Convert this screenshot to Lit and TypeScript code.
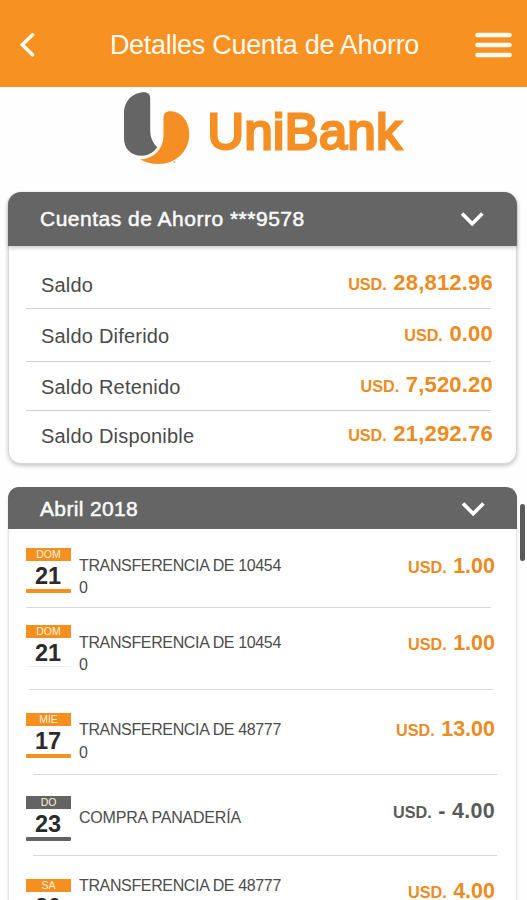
import { LitElement, html, css, svg } from "lit";
import { customElement, property } from "lit/decorators.js";

interface Movement {
  weekday: string;
  day: string;
  lines: string[];
  amount: string;
  debit?: boolean;
}

const balances = [
  { label: "Saldo", amount: "28,812.96" },
  { label: "Saldo Diferido", amount: "0.00" },
  { label: "Saldo Retenido", amount: "7,520.20" },
  { label: "Saldo Disponible", amount: "21,292.76" },
];

const movements: Movement[] = [
  { weekday: "DOM", day: "21", lines: ["TRANSFERENCIA DE 10454", "0"], amount: "1.00" },
  { weekday: "DOM", day: "21", lines: ["TRANSFERENCIA DE 10454", "0"], amount: "1.00" },
  { weekday: "MIE", day: "17", lines: ["TRANSFERENCIA DE 48777", "0"], amount: "13.00" },
  { weekday: "DO", day: "23", lines: ["COMPRA PANADERÍA"], amount: "- 4.00", debit: true },
  { weekday: "SA", day: "20", lines: ["TRANSFERENCIA DE 48777"], amount: "4.00" },
];

const chevron = svg`<path d="M2 2.5 L12.2 12.7 L22.4 2.5" fill="none" stroke="#fff" stroke-width="3.6"/>`;

@customElement("money-amount")
export class MoneyAmount extends LitElement {
  @property() value = "";

  static styles = css`
    :host {
      display: block;
      white-space: nowrap;
      font: bold 22px/24px "Liberation Sans", Arial, sans-serif;
      letter-spacing: 0.2px;
    }
    .currency {
      font-size: 16.2px;
      letter-spacing: 0;
      margin-right: 6.5px;
    }
  `;

  render() {
    return html`<span class="currency">USD.</span><span>${this.value}</span>`;
  }
}

@customElement("date-badge")
export class DateBadge extends LitElement {
  @property() weekday = "";
  @property() day = "";

  static styles = css`
    :host {
      display: flex;
      flex-direction: column;
      width: 45px;
      height: 45px;
      text-align: center;
      font-family: "Liberation Sans", Arial, sans-serif;
      --tone: #f58f1f;
      --rule: var(--tone);
    }
    :host([debit]) {
      --tone: #636363;
    }
    :host([faint]) {
      --rule: transparent;
    }
    .weekday {
      flex: none;
      height: 13px;
      background: var(--tone);
      color: #fff3df;
      font-size: 10.5px;
      line-height: 13px;
    }
    .day {
      flex: none;
      height: 28px;
      color: #2b2b2b;
      font-size: 23.5px;
      font-weight: bold;
      line-height: 30px;
      padding-right: 1px;
    }
    .rule {
      flex: none;
      height: 4px;
      border-radius: 1px;
      background: var(--rule);
    }
    :host([faint]) .rule {
      border-top: 1px solid #f3f0ec;
      border-radius: 0;
    }
  `;

  render() {
    return html`
      <div class="weekday">${this.weekday}</div>
      <div class="day">${this.day}</div>
      <div class="rule"></div>
    `;
  }
}

@customElement("app-root")
export class AppRoot extends LitElement {
  static styles = css`
    :host {
      display: block;
      position: relative;
      height: 900px;
      overflow: hidden;
      background: #fefefe;
      font-family: "Liberation Sans", Arial, sans-serif;
    }
    * {
      box-sizing: border-box;
    }
    svg {
      display: block;
    }
    .topbar {
      display: flex;
      align-items: center;
      justify-content: space-between;
      height: 87px;
      padding: 3px 15px 0 20px;
      background: #f79122;
      color: #fffaf0;
    }
    .title {
      font-size: 27px;
      line-height: 32px;
      letter-spacing: -0.3px;
      margin-left: 18px;
      white-space: nowrap;
    }
    .brand {
      display: flex;
      height: 105px;
      padding: 5px 0 0 123px;
    }
    .brand-name {
      margin: 9px 0 0 10.5px;
      color: #f58f23;
      font-size: 50.5px;
      line-height: 62px;
      letter-spacing: 0.5px;
      -webkit-text-stroke: 2.8px #f58f23;
    }
    .card {
      margin: 0 10px 0 8px;
      background: #fff;
      border: 1px solid #d6d6d6;
      border-top: 0;
      border-radius: 13px;
      box-shadow: 0 2px 4px rgba(0, 0, 0, 0.22);
    }
    .card-head {
      display: flex;
      align-items: center;
      justify-content: space-between;
      height: 54px;
      margin: 0 -1px;
      padding: 0 32px 0 32px;
      border-radius: 13px 13px 0 0;
      background: #656565;
      color: #fafafa;
      font-size: 21px;
      letter-spacing: 0.5px;
      -webkit-text-stroke: 0.5px #fafafa;
    }
    .summary {
      height: 272px;
    }
    .summary .card-head {
      box-shadow: 0 2px 4px rgba(0, 0, 0, 0.2);
    }
    .balances {
      display: grid;
      grid-template-rows: 63px 53px 49px 50px;
      padding: 0 25px 0 17px;
    }
    .balance {
      display: flex;
      justify-content: space-between;
      padding: 27px 0 0 15px;
      border-bottom: 1px solid #cfcfcf;
      color: #4a4a4a;
    }
    .balance + .balance {
      padding-top: 15px;
    }
    .balance:nth-child(n + 3) {
      padding-top: 13px;
    }
    .balance:last-child {
      border-bottom: 0;
    }
    .label {
      font-size: 20px;
      line-height: 24px;
      letter-spacing: 0.2px;
    }
    .balance money-amount,
    .movement money-amount {
      color: #ec8b1f;
    }
    .balance money-amount {
      margin: -2px -2px 0 0;
    }
    .history {
      height: 440px;
      margin-top: 23px;
      border-color: #e6e6e6;
      box-shadow: 0 1px 3px rgba(0, 0, 0, 0.12);
    }
    .history .card-head {
      height: 42px;
      border-radius: 11px 11px 0 0;
      padding-top: 2px;
      padding-right: 31px;
      letter-spacing: 0.35px;
    }
    .movements {
      display: grid;
      grid-template-rows: 79px 82px 85px 81px 85px;
      padding: 0 19px 0 17px;
    }
    .movement {
      display: grid;
      grid-template-columns: 45px 1fr auto;
      align-items: start;
      column-gap: 8px;
      background: linear-gradient(#dadada, #dadada) 0 100% / 465px 1px no-repeat;
    }
    .movement date-badge {
      margin-top: 19px;
    }
    .detail {
      margin-top: 26px;
      color: #4c4c4c;
      font-size: 16px;
      line-height: 22px;
      letter-spacing: -0.36px;
      white-space: nowrap;
    }
    .movement money-amount {
      margin: 25px 2px 0 0;
      font-size: 21.5px;
      letter-spacing: 0;
    }
    .movement:nth-child(2) {
      background-position: 3px 100%;
      background-size: 464px 1px;
    }
    .movement:nth-child(2) date-badge {
      margin-top: 17px;
    }
    .movement:nth-child(2) .detail {
      margin-top: 24px;
    }
    .movement:nth-child(2) money-amount {
      margin-top: 23px;
    }
    .movement:nth-child(n + 3) {
      background-position: 7px 100%;
      background-size: 464px 1px;
    }
    .movement:nth-child(3) date-badge,
    .movement:nth-child(5) date-badge {
      margin-top: 23px;
    }
    .movement:nth-child(3) .detail {
      margin-top: 28px;
      line-height: 23px;
    }
    .movement:nth-child(3) money-amount {
      margin-top: 27px;
    }
    .movement:nth-child(4) date-badge {
      margin-top: 21px;
    }
    .movement:nth-child(4) .detail {
      margin-top: 32px;
      letter-spacing: -0.2px;
    }
    .movement:nth-child(4) money-amount {
      margin-top: 24px;
      color: #5a5a5a;
      letter-spacing: 0.3px;
    }
    .movement:nth-child(5) .detail {
      margin-top: 19px;
    }
    .movement:nth-child(5) money-amount {
      margin-top: 23px;
    }
    .scrollbar {
      position: absolute;
      top: 504px;
      right: 2px;
      width: 5px;
      height: 57px;
      border-radius: 3px;
      background: #5a5a5a;
    }
  `;

  render() {
    return html`
      <header class="topbar">
        <svg width="16" height="26" viewBox="0 0 16 26">
          <path d="M12.5 2.8 L2.3 12.8 L12.5 22.8" fill="none" stroke="#fffaf0" stroke-width="3.6" stroke-linecap="round" />
        </svg>
        <div class="title">Detalles Cuenta de Ahorro</div>
        <svg width="37" height="26" viewBox="0 0 37 26">
          <path d="M2.4 3 H34.6 M2.4 13 H34.6 M2.4 23 H34.6" stroke="#fffaf0" stroke-width="4.4" stroke-linecap="round" />
        </svg>
      </header>

      <div class="brand">
        <svg width="74" height="76" viewBox="123 92 74 76">
          <path
            d="M124 113 C124 101 133 92.3 144 92.3 C148 92.3 150.2 94.5 150.2 98.5 V130 C150.2 138 153 143 157.3 147.3 C153 153 148 155.7 142 155.7 C131 155.7 124 149 124 138 Z"
            fill="#656565"
          />
          <path
            d="M163.5 118 C163.5 113.5 166 111.3 170 111.3 C181 111.3 189.3 121 189.3 134 C189.3 151 176 164 158.5 164 C151 164 145 162.5 140 159.3 C154 159 163.5 149 163.5 135 Z"
            fill="#f58f23"
          />
          <circle cx="174.5" cy="162" r="0.9" fill="#f6b46b" />
        </svg>
        <div class="brand-name">UniBank</div>
      </div>

      <section class="card summary">
        <div class="card-head">
          <span>Cuentas de Ahorro ***9578</span>
          <svg width="25" height="16" viewBox="0 0 25 16">${chevron}</svg>
        </div>
        <div class="balances">
          ${balances.map(
            (b) => html`
              <div class="balance">
                <span class="label">${b.label}</span>
                <money-amount .value=${b.amount}></money-amount>
              </div>
            `
          )}
        </div>
      </section>

      <section class="card history">
        <div class="card-head">
          <span>Abril 2018</span>
          <svg width="25" height="16" viewBox="0 0 25 16">${chevron}</svg>
        </div>
        <div class="movements">
          ${movements.map(
            (m, i) => html`
              <div class="movement">
                <date-badge .weekday=${m.weekday} .day=${m.day} ?debit=${m.debit} ?faint=${i === 1}></date-badge>
                <div class="detail">${m.lines.map((line) => html`<div>${line}</div>`)}</div>
                <money-amount .value=${m.amount}></money-amount>
              </div>
            `
          )}
        </div>
      </section>

      <div class="scrollbar"></div>
    `;
  }
}
